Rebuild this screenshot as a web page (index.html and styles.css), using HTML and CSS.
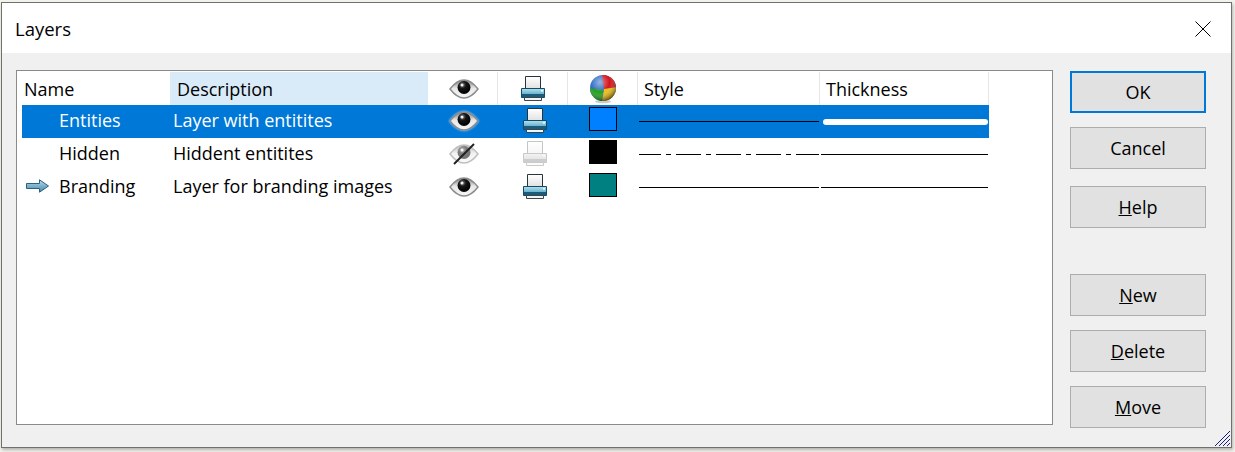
FILE: index.html
```html
<!DOCTYPE html>
<html lang="en">
<head>
<meta charset="utf-8">
<title>Layers</title>
<link rel="stylesheet" href="styles.css">
</head>
<body>
<svg class="defs" width="0" height="0" aria-hidden="true">
  <defs>
    <linearGradient id="eyeWhite" x1="0" y1="0" x2="0" y2="1"><stop offset="0" stop-color="#777"/><stop offset=".45" stop-color="#e8e8e8"/><stop offset="1" stop-color="#f6f6f6"/></linearGradient>
    <linearGradient id="prnPaper" x1="0" y1="0" x2="0" y2="1"><stop offset="0" stop-color="#fff"/><stop offset="1" stop-color="#e0e0e0"/></linearGradient>
    <linearGradient id="prnBody" x1="0" y1="0" x2="0" y2="1"><stop offset="0" stop-color="#b4e2ef"/><stop offset=".6" stop-color="#6ab4d0"/><stop offset="1" stop-color="#3d8fb0"/></linearGradient>
    <linearGradient id="arrowFill" x1="0" y1="0" x2="0" y2="1"><stop offset="0" stop-color="#b4dcec"/><stop offset="1" stop-color="#4485a8"/></linearGradient>
    <radialGradient id="ballShine" cx=".38" cy=".28" r=".75"><stop offset="0" stop-color="#fff" stop-opacity=".5"/><stop offset=".5" stop-color="#fff" stop-opacity="0"/><stop offset="1" stop-color="#000" stop-opacity=".6"/></radialGradient>
    <radialGradient id="pupil" cx=".38" cy=".3" r=".7"><stop offset="0" stop-color="#888"/><stop offset=".4" stop-color="#151515"/><stop offset="1" stop-color="#000"/></radialGradient>
    <symbol id="eye" viewBox="0 0 30 22">
      <path d="M1 11C6 4.500 10 2 15 2S24 4.500 29 11C24 17.500 20 20 15 20S6 17.500 1 11Z" fill="url(#eyeWhite)" stroke="#8c8c8c" stroke-width="1.500"/>
      <circle cx="15" cy="9.500" r="6.500" fill="url(#pupil)"/>
      <circle cx="13" cy="7" r="1.500" fill="#f0f0f0"/>
    </symbol>
    <symbol id="printer" viewBox="0 0 26 26">
      <path d="M5.500 .5H20.500V13H5.500Z" fill="url(#prnPaper)" stroke="#26343c"/>
      <path d="M1.500 12.500H24.500V21.500H1.500Z" fill="url(#prnBody)" stroke="#164a63"/>
      <path d="M2 19.500H24" stroke="#1a5c7a" stroke-width="3"/>
      <path d="M21 14h2v1.500h-2z" fill="#f0fafd"/>
      <path d="M4.500 21.500H21.500V24.500H4.500Z" fill="#f4f4f4" stroke="#3a464c"/>
    </symbol>
    <symbol id="ball" viewBox="0 0 28 30">
      <defs><clipPath id="ballClip"><circle cx="14" cy="14" r="13"/></clipPath></defs>
      <ellipse cx="14" cy="27.500" rx="8" ry="1.800" fill="#ccc"/>
      <g clip-path="url(#ballClip)">
        <rect width="28" height="28" fill="#2f6cc4"/>
        <path d="M13 0H28V13L15 15Z" fill="#d4141c"/>
        <path d="M0 14L14 16L13 28H0Z" fill="#22a01c"/>
        <path d="M15 15L28 13V28H13Z" fill="#f0be10"/>
      </g>
      <circle cx="14" cy="14" r="13" fill="url(#ballShine)"/>
    </symbol>
  </defs>
</svg>
<div class="window">
  <header class="titlebar">
    <h1 class="title">Layers</h1>
    <svg class="close" width="16" height="16" viewBox="0 0 16 16" aria-label="Close"><path d="M.5.500 15.500 15.500M15.500.500.500 15.500" stroke="#000" fill="none"/></svg>
  </header>
  <main class="body">
    <section class="listbox">
      <div class="row head">
        <div class="cell c-name">Name</div>
        <div class="cell c-desc sorted">Description</div>
        <div class="cell c-icon"><svg class="ic-eye"><use href="#eye"/></svg></div>
        <div class="cell c-icon"><svg class="ic-prn"><use href="#printer"/></svg></div>
        <div class="cell c-icon"><svg class="ic-ball"><use href="#ball"/></svg></div>
        <div class="cell c-style">Style</div>
        <div class="cell c-thick">Thickness</div>
      </div>
      <div class="row selected">
        <div class="cell c-name"><span class="marker"></span>Entities</div>
        <div class="cell c-desc">Layer with entitites</div>
        <div class="cell c-icon"><svg class="ic-eye halo"><use href="#eye"/></svg></div>
        <div class="cell c-icon"><svg class="ic-prn shift"><use href="#printer"/></svg></div>
        <div class="cell c-icon"><span class="swatch blue"></span></div>
        <div class="cell c-style"><span class="line solid"></span></div>
        <div class="cell c-thick"><span class="line thick"></span></div>
      </div>
      <div class="row">
        <div class="cell c-name"><span class="marker"></span>Hidden</div>
        <div class="cell c-desc">Hiddent entitites</div>
        <div class="cell c-icon">
          <span class="hidden-eye"><svg class="ic-eye faded"><use href="#eye"/></svg><svg class="slash" width="24" height="22" viewBox="0 0 24 22"><path d="M2 21 22 1" stroke="#222" stroke-width="2"/></svg></span>
        </div>
        <div class="cell c-icon"><svg class="ic-prn shift disabled"><use href="#printer"/></svg></div>
        <div class="cell c-icon"><span class="swatch black"></span></div>
        <div class="cell c-style"><span class="line dashdot"></span></div>
        <div class="cell c-thick"><span class="line solid"></span></div>
      </div>
      <div class="row">
        <div class="cell c-name">
          <svg class="marker" width="24" height="14" viewBox="0 0 24 14"><path d="M.500 4.500H13.500V.800L22.500 7 13.500 13.200V9.500H.500Z" fill="url(#arrowFill)" stroke="#2d5f7e"/></svg>Branding
        </div>
        <div class="cell c-desc">Layer for branding images</div>
        <div class="cell c-icon"><svg class="ic-eye"><use href="#eye"/></svg></div>
        <div class="cell c-icon"><svg class="ic-prn shift"><use href="#printer"/></svg></div>
        <div class="cell c-icon"><span class="swatch teal"></span></div>
        <div class="cell c-style"><span class="line solid"></span></div>
        <div class="cell c-thick"><span class="line solid"></span></div>
      </div>
    </section>
    <aside class="buttons">
      <button class="btn default">OK</button>
      <button class="btn">Cancel</button>
      <button class="btn gap-s"><u>H</u>elp</button>
      <button class="btn gap-l"><u>N</u>ew</button>
      <button class="btn"><u>D</u>elete</button>
      <button class="btn"><u>M</u>ove</button>
    </aside>
    <svg class="grip" width="16" height="16" viewBox="0 0 16 16" aria-hidden="true"><path d="M0 15 15 0M4 15 15 4M8 15 15 8M12 15 15 12" stroke="#1a1a8c" fill="none"/></svg>
  </main>
</div>
</body>
</html>
```
FILE: styles.css
```css
* { box-sizing: border-box; }
html, body { margin: 0; height: 100%; background: #f4f3ee; }
body { padding: 2px 3px 4px 1px; font: 18px/24px "Open Sans", "Noto Sans", sans-serif; color: #000; overflow: hidden; }
.defs { position: absolute; }
.window { display: flex; flex-direction: column; height: 446px; border: 1px solid #70706c; background: #f0f0f0; box-shadow: 1px 2px 3px rgba(60, 60, 50, .35); }
.titlebar { flex: 0 0 50px; display: flex; align-items: center; justify-content: space-between; background: #fff; padding: 2px 20px 0 13px; }
.title { margin: 0; font-size: 18.500px; font-weight: 400; }
.close { display: block; }
.body { flex: 1; position: relative; display: flex; padding: 17px 25px 0 14px; gap: 17px; }
.listbox { flex: 0 0 1037px; height: 355px; background: #fff; border: 1px solid #8a8a8a; padding: 1px 0 0 5px; }
.row { display: flex; height: 33px; width: 967px; align-items: center; }
.cell { height: 100%; display: flex; align-items: center; white-space: nowrap; }
.row:not(.head) .c-name, .row:not(.head) .c-desc { padding-bottom: 4px; }
.row:not(.head) .c-icon { padding-bottom: 2px; }
.row:not(.head) .c-icon .swatch { margin-bottom: 3px; }
.c-name { width: 148px; padding-left: 2px; }
.c-desc { width: 258px; padding-left: 3px; }
.c-icon { width: 70px; justify-content: center; }
.c-style { width: 182px; padding-left: 1px; }
.c-thick { width: 169px; padding-left: 1px; }
.head .c-desc { padding-left: 7px; }
.head .c-icon, .head .c-style, .head .c-thick { border-right: 1px solid #e5e5e5; }
.head .c-style, .head .c-thick { padding-left: 6px; }
.sorted { background: #d9ebf9; }
.selected { background: #0078d7; color: #fff; }
.marker { display: inline-block; width: 35px; flex: none; }
svg.marker { width: 24px; height: 14px; margin-left: 2px; margin-right: 9px; }
.ic-eye { width: 30px; height: 22px; display: block; transform: translateX(1px); }
.ic-prn { width: 26px; height: 26px; display: block; }
.shift { transform: translateX(2px); }
.ic-ball { width: 28px; height: 30px; display: block; }
.halo { filter: drop-shadow(0 0 1px #a8d0f4); }
.hidden-eye { position: relative; display: block; }
.faded { opacity: .55; }
.slash { position: absolute; left: 4px; top: 0; }
.disabled { opacity: .28; filter: grayscale(1); }
.swatch { display: block; width: 28px; height: 24px; border: 1px solid #000; }
.blue { background: #0080ff; }
.black { background: #000; }
.teal { background: #008080; }
.line { display: block; height: 1px; background: #000; }
.c-style .line { width: 180px; }
.c-thick .line { width: 167px; }
.c-thick .line.thick { width: 165px; height: 6px; margin-left: 2px; background: #fff; border-radius: 3px; }
.line.dashdot { background: linear-gradient(90deg, #000 0 25px, transparent 25px 30px, #000 30px 35px, transparent 35px) -3px 0 / 40px 1px repeat-x; }
.buttons { display: flex; flex-direction: column; width: 136px; margin-top: 1px; gap: 14px; }
.btn { width: 136px; height: 42px; flex: none; background: #e1e1e1; border: 1px solid #adadad; border-radius: 0; font: inherit; color: #000; padding: 0; }
.btn.default { border: 2px solid #0078d7; }
.gap-s { margin-top: 3px; }
.gap-l { margin-top: 32px; }
.grip { position: absolute; right: 0; bottom: 0; }
```
